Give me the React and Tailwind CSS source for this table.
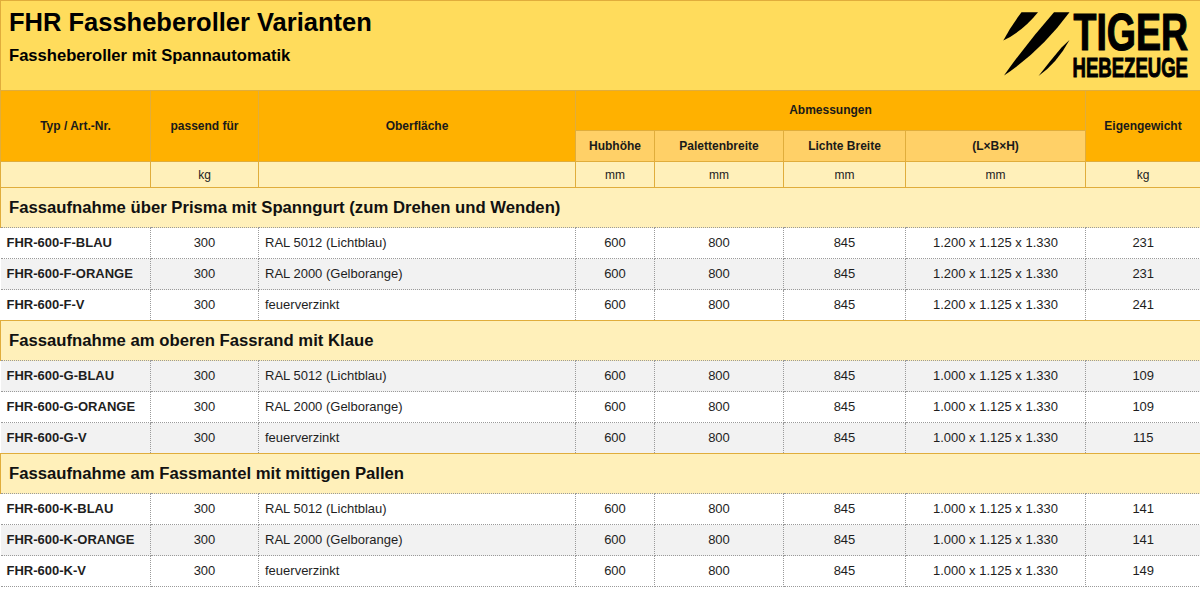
import React from "react";

const sections = [
  {
    title: "Fassaufnahme über Prisma mit Spanngurt (zum Drehen und Wenden)",
    rows: [
      ["FHR-600-F-BLAU", "RAL 5012 (Lichtblau)", "1.200 x 1.125 x 1.330", "231"],
      ["FHR-600-F-ORANGE", "RAL 2000 (Gelborange)", "1.200 x 1.125 x 1.330", "231"],
      ["FHR-600-F-V", "feuerverzinkt", "1.200 x 1.125 x 1.330", "241"],
    ],
  },
  {
    title: "Fassaufnahme am oberen Fassrand mit Klaue",
    rows: [
      ["FHR-600-G-BLAU", "RAL 5012 (Lichtblau)", "1.000 x 1.125 x 1.330", "109"],
      ["FHR-600-G-ORANGE", "RAL 2000 (Gelborange)", "1.000 x 1.125 x 1.330", "109"],
      ["FHR-600-G-V", "feuerverzinkt", "1.000 x 1.125 x 1.330", "115"],
    ],
  },
  {
    title: "Fassaufnahme am Fassmantel mit mittigen Pallen",
    rows: [
      ["FHR-600-K-BLAU", "RAL 5012 (Lichtblau)", "1.000 x 1.125 x 1.330", "141"],
      ["FHR-600-K-ORANGE", "RAL 2000 (Gelborange)", "1.000 x 1.125 x 1.330", "141"],
      ["FHR-600-K-V", "feuerverzinkt", "1.000 x 1.125 x 1.330", "149"],
    ],
  },
];

function Logo() {
  return (
    <svg width="190" height="70" viewBox="1000 10 190 70" className="block overflow-visible">
      <path d="M1021.5,12.3 L1038,12.3 Q1023,31 1003.3,40.5 Q1011,26 1021.5,12.3Z" fill="#000" />
      <path d="M1054,12.3 L1069.5,12.3 Q1041,51 1004,75.5 Q1027,43 1054,12.3Z" fill="#000" />
      <path d="M1061.5,47.5 L1069.5,40 Q1057,63 1038.5,76 Q1050,61 1061.5,47.5Z" fill="#000" />
      <text
        transform="translate(1073.5 50) scale(0.7206 1)"
        x="0"
        y="0"
        fontFamily="'Liberation Sans',Arial,sans-serif"
        fontWeight="700"
        fontSize="52"
        fill="#000"
        stroke="#000"
        strokeWidth="1.2"
      >
        TIGER
      </text>
      <text
        transform="translate(1072.5 77) scale(0.663 1)"
        x="0"
        y="0"
        fontFamily="'Liberation Sans',Arial,sans-serif"
        fontWeight="700"
        fontSize="28"
        fill="#000"
        stroke="#000"
        strokeWidth="1"
      >
        HEBEZEUGE
      </text>
    </svg>
  );
}

const hd = "border border-[#e0ad3c] font-bold text-[12px] text-[#1a1a1a] text-center align-middle";
const un = "border border-[#e0ad3c] text-[12px] text-[#222] text-center align-middle h-[26px] bg-[#fff0ba]";
const dc = "border border-dotted border-[#9a9a9a] text-[13px] text-[#1e1e1e] align-middle h-[31px]";

export default function App() {
  let idx = 0;
  return (
    <div className="w-[1200px] h-[594px] bg-white overflow-hidden font-['Liberation_Sans',Arial,sans-serif]">
      <div className="h-[90px] bg-[#ffdc5c] border-t border-l border-[#e0ad3c] flex justify-between">
        <div className="pl-[8px] pt-[8.7px]">
          <div className="text-[25.5px] leading-none font-bold text-black">FHR Fassheberoller Varianten</div>
          <div className="mt-[12.6px] text-[16.6px] leading-none font-bold text-black">Fassheberoller mit Spannautomatik</div>
        </div>
        <div className="mt-[9px] mr-[10px]">
          <Logo />
        </div>
      </div>
      <table className="w-[1200px] table-fixed border-collapse">
        <colgroup>
          <col className="w-[150px]" />
          <col className="w-[108px]" />
          <col className="w-[317px]" />
          <col className="w-[79px]" />
          <col className="w-[129px]" />
          <col className="w-[122px]" />
          <col className="w-[180px]" />
          <col className="w-[115px]" />
        </colgroup>
        <thead>
          <tr>
            <th rowSpan={2} className={`${hd} bg-[#ffb100]`}>Typ / Art.-Nr.</th>
            <th rowSpan={2} className={`${hd} bg-[#ffb100]`}>passend für</th>
            <th rowSpan={2} className={`${hd} bg-[#ffb100]`}>Oberfläche</th>
            <th colSpan={4} className={`${hd} bg-[#ffb100] h-[40px] pb-[2px]`}>Abmessungen</th>
            <th rowSpan={2} className={`${hd} bg-[#ffb100]`}>Eigengewicht</th>
          </tr>
          <tr>
            <th className={`${hd} bg-[#ffd067] h-[31px]`}>Hubhöhe</th>
            <th className={`${hd} bg-[#ffd067] h-[31px]`}>Palettenbreite</th>
            <th className={`${hd} bg-[#ffd067] h-[31px]`}>Lichte Breite</th>
            <th className={`${hd} bg-[#ffd067] h-[31px]`}>(L×B×H)</th>
          </tr>
          <tr>
            <td className={un}></td>
            <td className={un}>kg</td>
            <td className={un}></td>
            <td className={un}>mm</td>
            <td className={un}>mm</td>
            <td className={un}>mm</td>
            <td className={un}>mm</td>
            <td className={un}>kg</td>
          </tr>
        </thead>
        <tbody>
          {sections.map((s) => (
            <React.Fragment key={s.title}>
              <tr>
                <td
                  colSpan={8}
                  className="h-[40px] bg-[#fff0ba] border-t border-l border-[#e0ad3c] pl-[8px] text-[16.7px] font-bold text-[#111] align-middle"
                >
                  {s.title}
                </td>
              </tr>
              {s.rows.map((r) => {
                const bg = idx++ % 2 === 0 ? "bg-white" : "bg-[#f2f2f2]";
                return (
                  <tr key={r[0]} className={bg}>
                    <td className={`${dc} border-l-0 pl-[6px] font-bold text-[12px]`}>{r[0]}</td>
                    <td className={`${dc} text-center`}>300</td>
                    <td className={`${dc} pl-[6px]`}>{r[1]}</td>
                    <td className={`${dc} text-center`}>600</td>
                    <td className={`${dc} text-center`}>800</td>
                    <td className={`${dc} text-center`}>845</td>
                    <td className={`${dc} text-center`}>{r[2]}</td>
                    <td className={`${dc} text-center border-r-0`}>{r[3]}</td>
                  </tr>
                );
              })}
            </React.Fragment>
          ))}
        </tbody>
      </table>
    </div>
  );
}
